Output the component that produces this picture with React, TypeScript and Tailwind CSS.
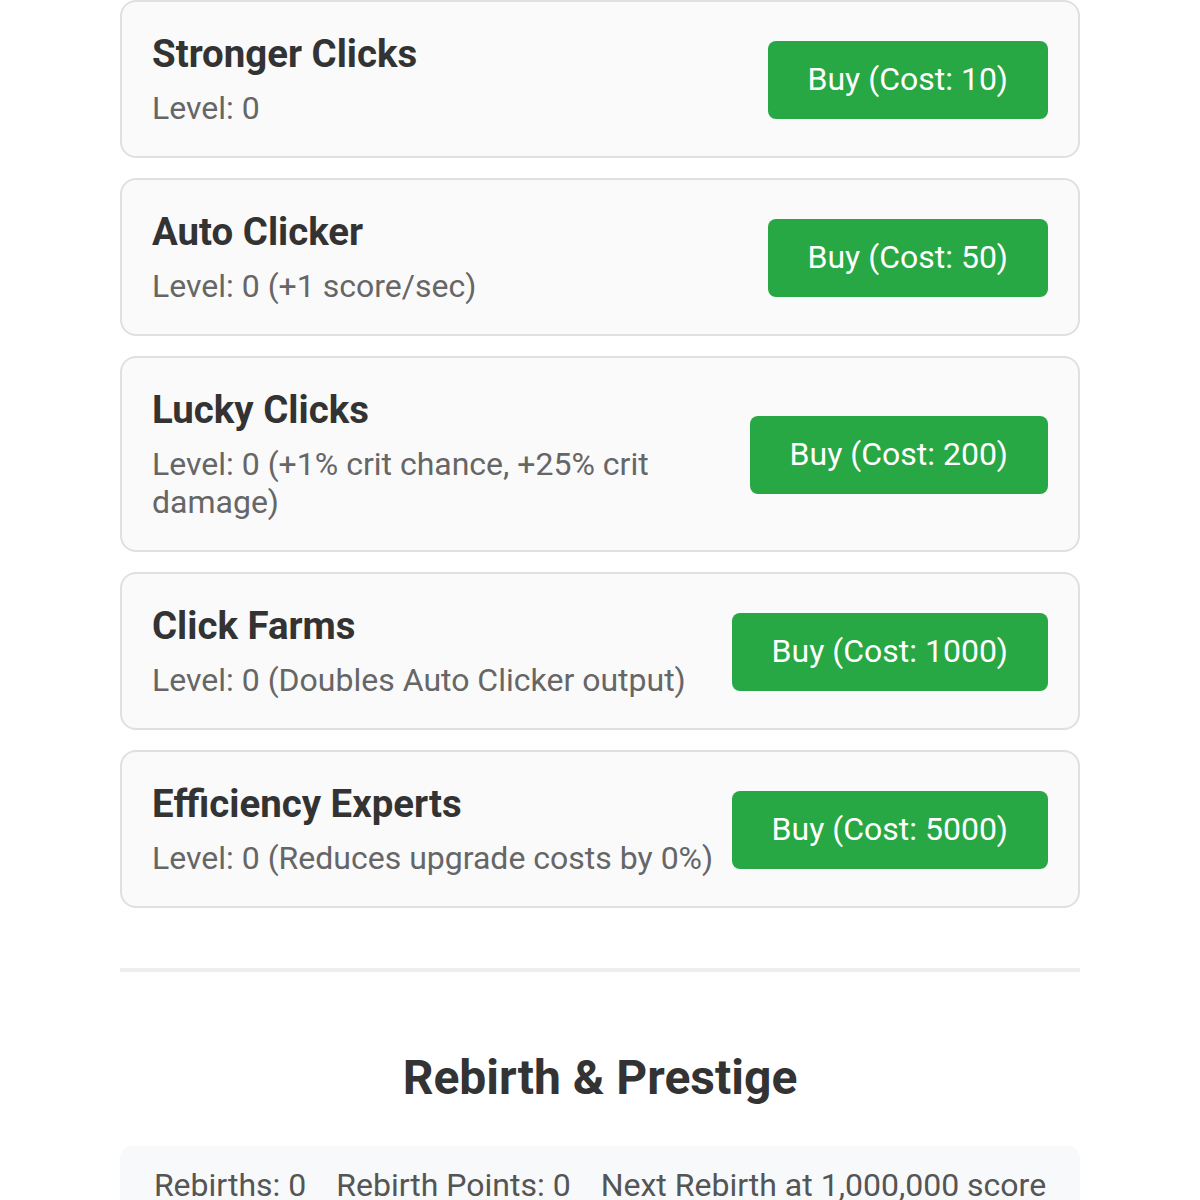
import React from 'react';

type Upgrade = {
  name: string;
  level: string;
  cost: number;
};

const upgrades: Upgrade[] = [
  { name: 'Stronger Clicks', level: 'Level: 0', cost: 10 },
  { name: 'Auto Clicker', level: 'Level: 0 (+1 score/sec)', cost: 50 },
  { name: 'Lucky Clicks', level: 'Level: 0 (+1% crit chance, +25% crit damage)', cost: 200 },
  { name: 'Click Farms', level: 'Level: 0 (Doubles Auto Clicker output)', cost: 1000 },
  { name: 'Efficiency Experts', level: 'Level: 0 (Reduces upgrade costs by 0%)', cost: 5000 },
];

const UpgradeCard: React.FC<{ upgrade: Upgrade }> = ({ upgrade }) => (
  <div className="flex items-center justify-between gap-4 rounded-2xl border-2 border-[#e0e0e0] bg-[#fafafa] px-[30px] pt-[30px] pb-[28px]">
    <div className="min-w-0">
      <h3 className="mb-[13px] text-[38.4px] font-bold leading-[44px] text-[#333]">{upgrade.name}</h3>
      <p className="mb-px text-[32px] leading-[38px] text-[#666]">{upgrade.level}</p>
    </div>
    <button className="shrink-0 whitespace-nowrap rounded-lg bg-[#28a745] px-10 pt-[19px] pb-[21px] text-[32px] leading-[38px] text-white">
      Buy (Cost: {upgrade.cost})
    </button>
  </div>
);

export default function App() {
  return (
    <div className="min-h-[1200px] bg-white font-['Roboto','Liberation_Sans',sans-serif]">
      <div className="mx-auto w-[960px]">
        {/* Upgrade shop */}
        <div className="flex flex-col gap-5">
          {upgrades.map((u) => (
            <UpgradeCard key={u.name} upgrade={u} />
          ))}
        </div>

        <div className="mt-[60px] h-1 bg-[#eeeeee]" />

        {/* Rebirth */}
        <h2 className="mt-[77px] mb-[39px] text-center text-[48px] font-bold leading-[1.2] text-[#333]">
          Rebirth &amp; Prestige
        </h2>
        <div className="flex justify-center gap-[30px] whitespace-nowrap rounded-xl bg-[#f8f9fa] px-5 py-5 text-[32px] leading-[38px] text-[#555]">
          <span>Rebirths: 0</span>
          <span>Rebirth Points: 0</span>
          <span>Next Rebirth at 1,000,000 score</span>
        </div>
      </div>
    </div>
  );
}
